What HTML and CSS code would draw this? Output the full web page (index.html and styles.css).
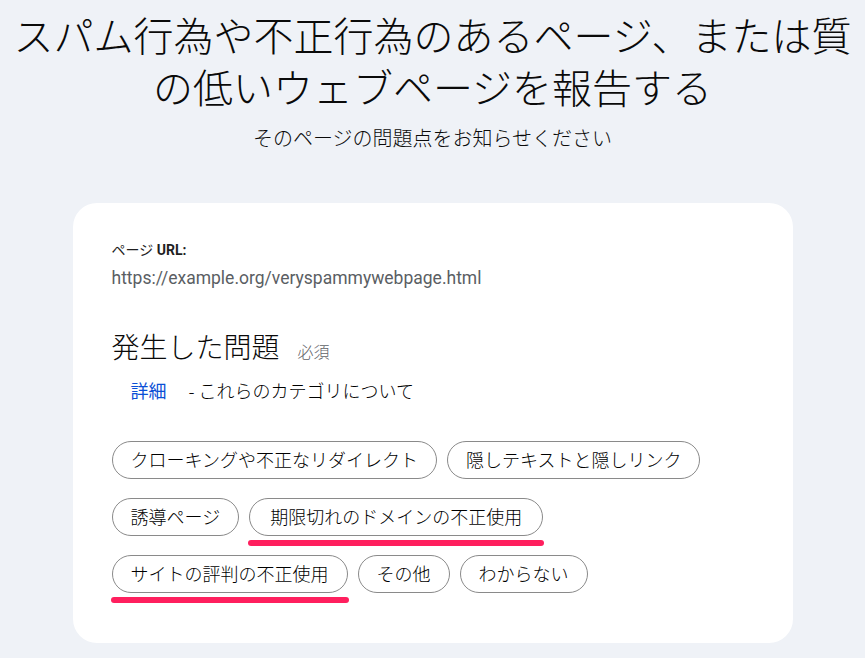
FILE: index.html
```html
<!DOCTYPE html>
<html lang="ja">
<head>
<meta charset="utf-8">
<title>スパム報告</title>
<link rel="stylesheet" href="styles.css">
</head>
<body>
<main class="page">
  <h1 class="title"><span class="title-line">スパム行為や不正行為のあるページ、または質</span><span class="title-line">の低いウェブページを報告する</span></h1>
  <p class="subtitle">そのページの問題点をお知らせください</p>
  <section class="card">
    <div class="label">ページ <b>URL:</b></div>
    <div class="url">https://example.org/veryspammywebpage.html</div>
    <h2 class="question">発生した問題<span class="required">必須</span></h2>
    <p class="details"><a class="link" href="#">詳細</a><span>- これらのカテゴリについて</span></p>
    <div class="chips">
      <span class="chip">クローキングや不正なリダイレクト</span>
      <span class="chip">隠しテキストと隠しリンク</span>
      <span class="chip">誘導ページ</span>
      <span class="chip chip-marked chip-wide">期限切れのドメインの不正使用</span>
      <span class="chip chip-marked">サイトの評判の不正使用</span>
      <span class="chip">その他</span>
      <span class="chip">わからない</span>
    </div>
  </section>
</main>
</body>
</html>
```
FILE: styles.css
```css
html, body {
  margin: 0;
  padding: 0;
  background: #eff2f7;
}
body {
  font-family: Roboto, "Noto Sans CJK JP", sans-serif;
  color: #1f1f1f;
}
.page {
  display: flex;
  flex-direction: column;
  align-items: center;
  padding-top: 8px;
}
.title {
  margin: 0;
  display: flex;
  flex-direction: column;
  align-items: center;
  font-family: "Noto Sans CJK JP", sans-serif;
  font-weight: 300;
  font-size: 40px;
  color: #0a0a0a;
}
.title-line {
  display: block;
  height: 52px;
  line-height: 52px;
}
.subtitle {
  margin: 12px 0 0;
  font-family: "Noto Sans CJK JP", sans-serif;
  font-weight: 300;
  font-size: 20px;
  line-height: 28px;
  color: #0a0a0a;
}
.card {
  box-sizing: border-box;
  width: 720px;
  margin-top: 51px;
  background: #ffffff;
  border-radius: 24px;
  padding: 38px 39px 50px;
}
.label {
  font-size: 14px;
  line-height: 18px;
  color: #1f1f1f;
}
.label b {
  font-weight: 700;
}
.url {
  margin-top: 7px;
  font-size: 17.5px;
  line-height: 24px;
  color: #5a5e63;
}
.question {
  margin: 38px 0 0;
  font-family: "Noto Sans CJK JP", sans-serif;
  font-weight: 300;
  font-size: 28px;
  line-height: 36px;
  display: flex;
  align-items: baseline;
  color: #0a0a0a;
}
.required {
  margin-left: 18px;
  font-size: 16px;
  font-weight: 300;
  color: #5f6368;
}
.details {
  margin: 9px 0 0;
  font-family: "Noto Sans CJK JP", sans-serif;
  font-weight: 300;
  font-size: 18px;
  line-height: 24px;
  color: #000000;
  display: flex;
}
.link {
  margin-left: 19px;
  margin-right: 22px;
  font-weight: 400;
  color: #0b4fd6;
  text-decoration: none;
}
.chips {
  margin-top: 39px;
  display: flex;
  flex-wrap: wrap;
  column-gap: 10px;
  row-gap: 19px;
  width: 600px;
}
.chip {
  position: relative;
  box-sizing: border-box;
  height: 38px;
  padding: 0 18px;
  border: 1.5px solid #8a8a8a;
  border-radius: 19px;
  font-family: "Noto Sans CJK JP", sans-serif;
  font-weight: 300;
  font-size: 18px;
  line-height: 35px;
  color: #000000;
  white-space: nowrap;
}
.chip-wide {
  padding: 0 20px;
}
.chip-marked::after {
  content: "";
  position: absolute;
  left: -2px;
  right: -2px;
  bottom: -11px;
  height: 6px;
  border-radius: 3px;
  background: #ff1f5e;
}
```
